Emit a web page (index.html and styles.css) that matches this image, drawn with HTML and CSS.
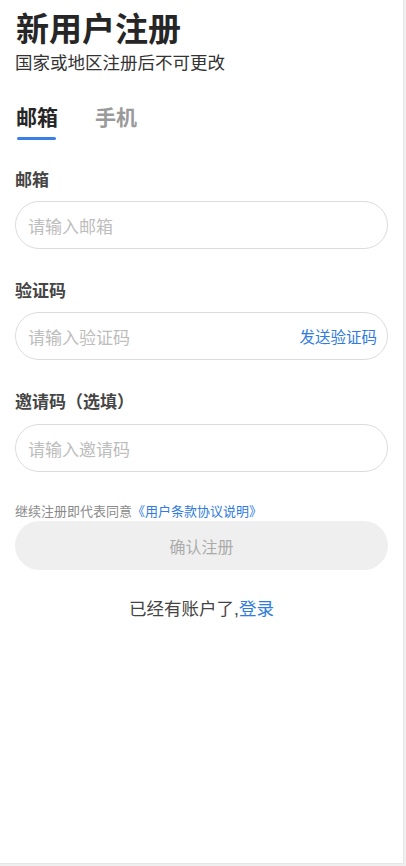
FILE: index.html
```html
<!DOCTYPE html>
<html lang="zh">
<head>
<meta charset="utf-8">
<title>新用户注册</title>
<link rel="stylesheet" href="styles.css">
</head>
<body>
<div class="page">
  <header class="head">
    <h1 class="title">新用户注册</h1>
    <p class="sub">国家或地区注册后不可更改</p>
  </header>
  <nav class="tabs">
    <div class="tab active">邮箱</div>
    <div class="tab">手机</div>
  </nav>
  <div class="field">
    <div class="label">邮箱</div>
    <div class="input"><span class="ph">请输入邮箱</span></div>
  </div>
  <div class="field">
    <div class="label">验证码</div>
    <div class="input"><span class="ph">请输入验证码</span><span class="send">发送验证码</span></div>
  </div>
  <div class="field field-last">
    <div class="label">邀请码（选填）</div>
    <div class="input"><span class="ph">请输入邀请码</span></div>
  </div>
  <p class="agree">继续注册即代表同意<span class="link">《用户条款协议说明》</span></p>
  <div class="btn">确认注册</div>
  <p class="login">已经有账户了,<span class="link">登录</span></p>
</div>
</body>
</html>
```
FILE: styles.css
```css
html, body {
  margin: 0;
  padding: 0;
  background: #efefef;
}
body {
  font-family: "Liberation Sans", "Noto Sans CJK SC", sans-serif;
  color: #333;
}
.page {
  width: 403px;
  height: 863px;
  background: #fff;
  border-right: 1px solid #e6e6e6;
  border-bottom: 1px solid #e6e6e6;
  display: flex;
  flex-direction: column;
}
.head {
  padding: 10px 15px 0 15px;
}
.title {
  margin: 0;
  padding-left: 1px;
  font-size: 33px;
  line-height: 40px;
  font-weight: 700;
  color: #262626;
}
.sub {
  margin: 2px 0 0;
  font-size: 17.5px;
  line-height: 22px;
  color: #333;
}
.tabs {
  display: flex;
  gap: 37px;
  padding: 0 16px;
  margin-top: 29px;
}
.tab {
  font-size: 21px;
  line-height: 30px;
  font-weight: 700;
  color: #9a9a9a;
  padding-bottom: 7px;
  position: relative;
}
.tab.active {
  color: #262626;
}
.tab.active::after {
  content: "";
  position: absolute;
  left: 1px;
  right: 2px;
  bottom: 0.5px;
  height: 2.5px;
  border-radius: 2px;
  background: #3a7fe6;
}
.field {
  padding: 0 15px;
  margin-top: 29px;
}
.field + .field {
  margin-top: 31px;
}
.field-last .input {
  margin-top: 9px;
}
.label {
  font-size: 17px;
  line-height: 24px;
  font-weight: 700;
  color: #454545;
}
.input {
  box-sizing: border-box;
  margin-top: 8px;
  height: 48px;
  border: 1px solid #dcdcdc;
  border-radius: 24px;
  display: flex;
  align-items: center;
  justify-content: space-between;
  padding: 0 10px 0 12px;
}
.ph {
  font-size: 17px;
  color: #bdbdbd;
}
.send {
  font-size: 15.5px;
  color: #2f7be0;
}
.agree {
  margin: 30.5px 15px 0;
  font-size: 13px;
  line-height: 18px;
  color: #8a8a8a;
}
.agree .link {
  color: #2f7be0;
}
.btn {
  margin: 0.5px 15px 0;
  height: 49px;
  border-radius: 25px;
  background: #efefef;
  color: #ababab;
  font-size: 16px;
  display: flex;
  align-items: center;
  justify-content: center;
}
.login {
  margin: 27px 0 0;
  text-align: center;
  font-size: 17.5px;
  line-height: 24px;
  color: #444;
}
.login .link {
  color: #2f7be0;
}
```
